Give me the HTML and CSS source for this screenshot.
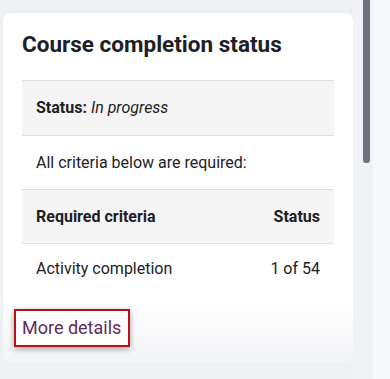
FILE: index.html
```html
<!DOCTYPE html>
<html lang="en">
<head>
<meta charset="utf-8">
<title>Course completion status</title>
<link rel="stylesheet" href="styles.css">
</head>
<body>
<div class="layout">
  <main class="main">
    <section class="card">
      <h2 class="card-title">Course completion status</h2>
      <table class="status-table">
        <tbody>
          <tr class="row shaded first">
            <td colspan="2"><strong>Status:</strong> <em>In progress</em></td>
          </tr>
          <tr class="row">
            <td colspan="2">All criteria below are required:</td>
          </tr>
          <tr class="row shaded head">
            <th class="left">Required criteria</th>
            <th class="right">Status</th>
          </tr>
          <tr class="row last">
            <td>Activity completion</td>
            <td class="right">1 of 54</td>
          </tr>
        </tbody>
      </table>
      <div class="footer">
        <a class="more-link" href="#">More details</a>
      </div>
    </section>
  </main>
  <div class="scroll-track"><div class="scroll-thumb"></div></div>
  <aside class="side"></aside>
</div>
</body>
</html>
```
FILE: styles.css
```css
html, body {
  margin: 0;
  padding: 0;
  height: 100%;
}
body {
  font-family: Roboto, "Liberation Sans", Arial, sans-serif;
  color: #1d2125;
  background: #eef0f3;
}
.layout {
  display: flex;
  height: 379px;
  overflow: hidden;
}
.main {
  flex: none;
  width: 353px;
  padding: 13px 0 0 3px;
  box-sizing: border-box;
  background: #eef0f3;
}
.card {
  width: 350px;
  height: 349px;
  box-sizing: border-box;
  background: linear-gradient(to bottom, #ffffff 0%, #ffffff 82%, #f3f4f6 100%);
  border-radius: 8px;
  padding: 18px 19px 0 19px;
}
.card-title {
  margin: 0;
  font-size: 22.5px;
  line-height: 26px;
  font-weight: 700;
  color: #1d2125;
}
.status-table {
  width: 100%;
  border-collapse: collapse;
  margin-top: 23px;
  font-size: 16px;
}
.row td, .row th {
  border-top: 1px solid #dee2e6;
  padding: 15px 14px 14px;
  line-height: 24px;
  text-align: left;
}
.row.first td {
  padding-bottom: 15px;
}
.row.shaded {
  background: #f5f5f5;
}
.row.head th {
  font-weight: 700;
  border-bottom: 1px solid #dee2e6;
}
.row.last td {
  border-top: none;
  padding-top: 13px;
}
.row .right {
  text-align: right;
}
.row em {
  font-style: italic;
}
.footer {
  margin-top: 14px;
  margin-left: -8px;
}
.more-link {
  display: inline-block;
  padding: 6px 7px 6px 6px;
  border: 2px solid #b5121b;
  color: #5f2b5e;
  text-decoration: none;
  font-size: 18px;
  line-height: 22px;
  box-shadow: 0 2px 6px rgba(0, 0, 0, 0.35);
  background: #ffffff;
}
.scroll-track {
  flex: none;
  width: 20px;
  background: #f1f2f5;
  padding-left: 10px;
  box-sizing: border-box;
}
.scroll-thumb {
  width: 7px;
  height: 163px;
  background: #6a737b;
  border-radius: 0 0 3px 3px;
}
.side {
  flex: 1;
  background: #f8f9fa;
}
```
